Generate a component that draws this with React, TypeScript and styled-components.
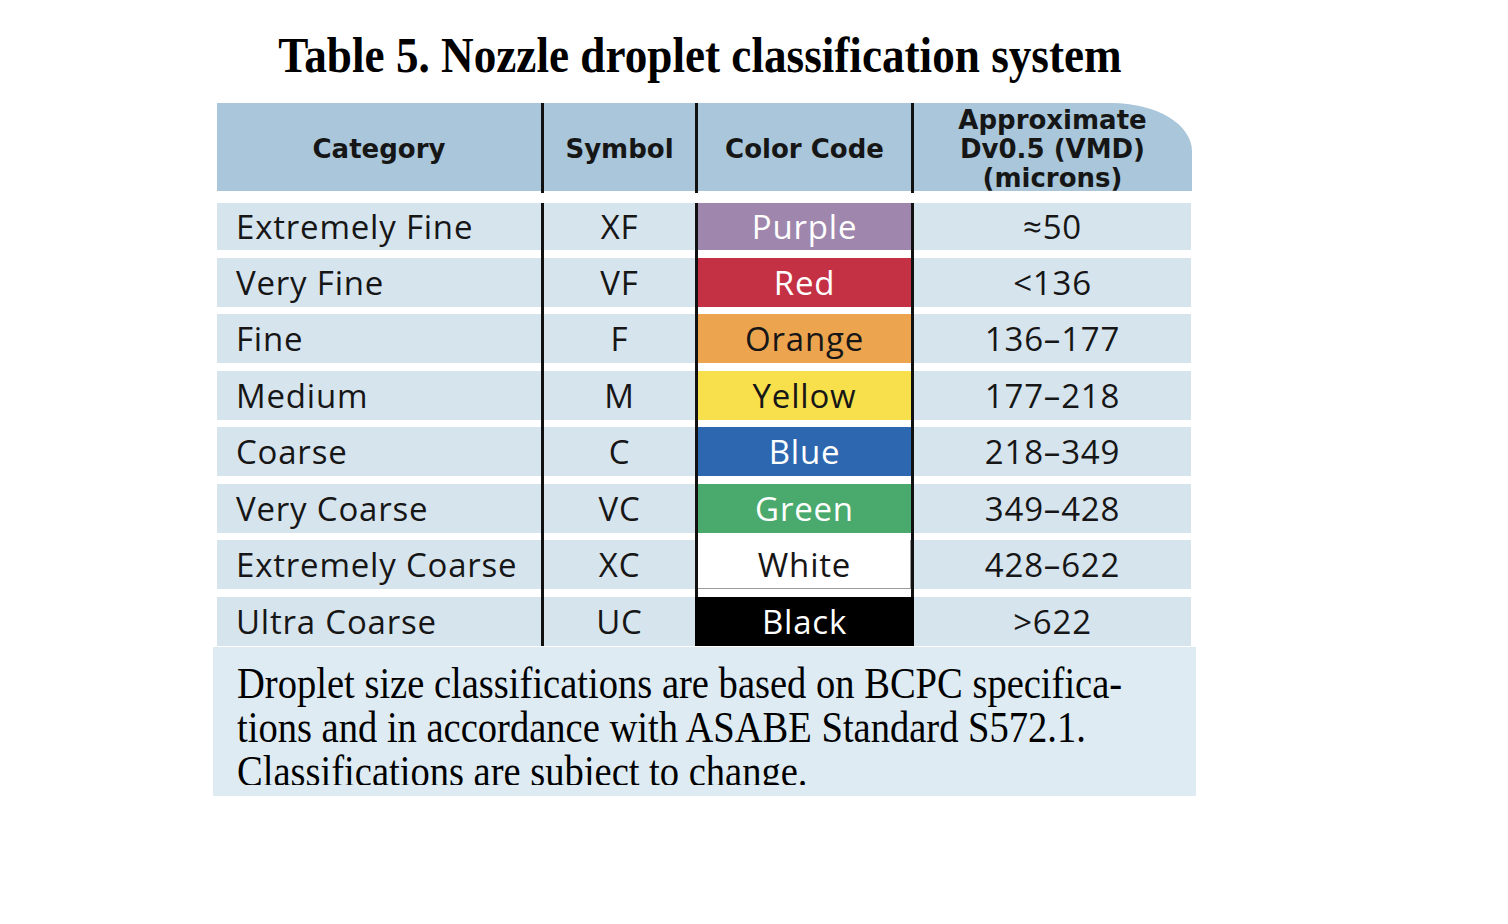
import { Fragment } from "react";
import styled, { createGlobalStyle } from "styled-components";

const GlobalStyle = createGlobalStyle`
html,body{
    margin:0;
    padding:0;
    background:#ffffff;
}
`;

const COLUMNS = "324px 3px 151px 3px 213px 3px 277px";

const Page = styled.div`
padding:30px 0 0 213px;
`;
const Sheet = styled.div`
width:983px;
display:flex;
flex-direction:column;
`;
const Title = styled.h1`
margin:0 14px 22px 4px;
height:51px;
display:flex;
justify-content:center;
font-family:"Liberation Serif","Times New Roman",serif;
font-weight:700;
font-size:51px;
line-height:51px;
color:#000;
white-space:nowrap;
`;
const Squeeze = styled.span<{ $scale: number; $origin: string }>`
display:inline-block;
transform:scaleX(${p => p.$scale});
transform-origin:${p => p.$origin};
`;
const Table = styled.div`
margin:0 4px;
display:flex;
flex-direction:column;
gap:12px;
`;
const HeaderRow = styled.div`
display:grid;
grid-template-columns:${COLUMNS};
height:88px;
background:#a9c6da;
border-top-right-radius:80px 48px;
`;
const HeadCell = styled.div`
display:flex;
align-items:center;
justify-content:center;
padding-top:3px;
text-align:center;
font-family:"DejaVu Sans",Verdana,sans-serif;
font-weight:700;
font-size:26px;
line-height:29px;
color:#161616;
`;
const Rule = styled.div<{ $col: number }>`
grid-column:${p => p.$col};
grid-row:1 / -1;
background:#111;
`;
const Body = styled.div`
display:grid;
grid-template-columns:${COLUMNS};
grid-template-rows:47px repeat(7,49px);
row-gap:7.5px;
`;
const BodyCell = styled.div<{ $row: number }>`
grid-row:${p => p.$row};
display:flex;
align-items:center;
background:#d6e4ee;
font-family:"Open Sans","Noto Sans",sans-serif;
font-size:33px;
letter-spacing:0.8px;
color:#161616;
white-space:nowrap;
`;
const CategoryCell = styled(BodyCell)`
grid-column:1;
padding-left:19px;
`;
const SymbolCell = styled(BodyCell)`
grid-column:3;
justify-content:center;
`;
const SizeCell = styled(BodyCell)`
grid-column:7;
justify-content:center;
`;
const SwatchCell = styled(BodyCell)<{ $bg: string; $fg: string; $wide?: boolean; $outlined?: boolean }>`
grid-column:${p => (p.$wide ? "4 / 7" : "5")};
position:relative;
z-index:1;
justify-content:center;
background:${p => p.$bg};
color:${p => p.$fg};
${p => (p.$outlined ? "box-shadow:inset 0 -1px 0 #9a9a9a, inset -1px 0 0 #9a9a9a;" : "")}
`;
const Footer = styled.div`
margin-top:1px;
height:149px;
box-sizing:border-box;
padding:15px 0 11px 24px;
background:#deebf3;
`;
const NoteLines = styled.div`
height:123px;
overflow:hidden;
font-family:"Liberation Serif","Times New Roman",serif;
font-size:44px;
line-height:44px;
color:#000;
`;
const NoteLine = styled.div`
white-space:nowrap;
`;

type Row = { category: string; symbol: string; color: string; bg: string; fg: string; size: string };

const rows: Row[] = [
    { category: "Extremely Fine", symbol: "XF", color: "Purple", bg: "#9e86ac", fg: "#ffffff", size: "≈50" },
    { category: "Very Fine", symbol: "VF", color: "Red", bg: "#c53144", fg: "#ffffff", size: "<136" },
    { category: "Fine", symbol: "F", color: "Orange", bg: "#eca44f", fg: "#161616", size: "136–177" },
    { category: "Medium", symbol: "M", color: "Yellow", bg: "#f8e04c", fg: "#161616", size: "177–218" },
    { category: "Coarse", symbol: "C", color: "Blue", bg: "#2d67b0", fg: "#ffffff", size: "218–349" },
    { category: "Very Coarse", symbol: "VC", color: "Green", bg: "#4aa96d", fg: "#ffffff", size: "349–428" },
    { category: "Extremely Coarse", symbol: "XC", color: "White", bg: "#ffffff", fg: "#161616", size: "428–622" },
    { category: "Ultra Coarse", symbol: "UC", color: "Black", bg: "#000000", fg: "#ffffff", size: ">622" },
];

const note = [
    "Droplet size classifications are based on BCPC specifica-",
    "tions and in accordance with ASABE Standard S572.1.",
    "Classifications are subject to change.",
];

export default function App() {
    return <Page>
        <GlobalStyle />
        <Sheet>
            <Title><Squeeze $scale={0.886} $origin="center">Table 5. Nozzle droplet classification system</Squeeze></Title>
            <Table>
                <HeaderRow>
                    <HeadCell>Category</HeadCell>
                    <Rule $col={2} />
                    <HeadCell>Symbol</HeadCell>
                    <Rule $col={4} />
                    <HeadCell>Color Code</HeadCell>
                    <Rule $col={6} />
                    <HeadCell>Approximate<br />Dv0.5 (VMD)<br />(microns)</HeadCell>
                </HeaderRow>
                <Body>
                    <Rule $col={2} />
                    <Rule $col={4} />
                    <Rule $col={6} />
                    {rows.map((r, i) => (
                        <Fragment key={r.symbol}>
                            <CategoryCell $row={i + 1}>{r.category}</CategoryCell>
                            <SymbolCell $row={i + 1}>{r.symbol}</SymbolCell>
                            <SwatchCell $row={i + 1} $bg={r.bg} $fg={r.fg}
                                $wide={r.color === "Black"} $outlined={r.color === "White"}>{r.color}</SwatchCell>
                            <SizeCell $row={i + 1}>{r.size}</SizeCell>
                        </Fragment>
                    ))}
                </Body>
            </Table>
            <Footer>
                <NoteLines>
                    {note.map(line => (
                        <NoteLine key={line}><Squeeze $scale={0.876} $origin="left">{line}</Squeeze></NoteLine>
                    ))}
                </NoteLines>
            </Footer>
        </Sheet>
    </Page>
}
